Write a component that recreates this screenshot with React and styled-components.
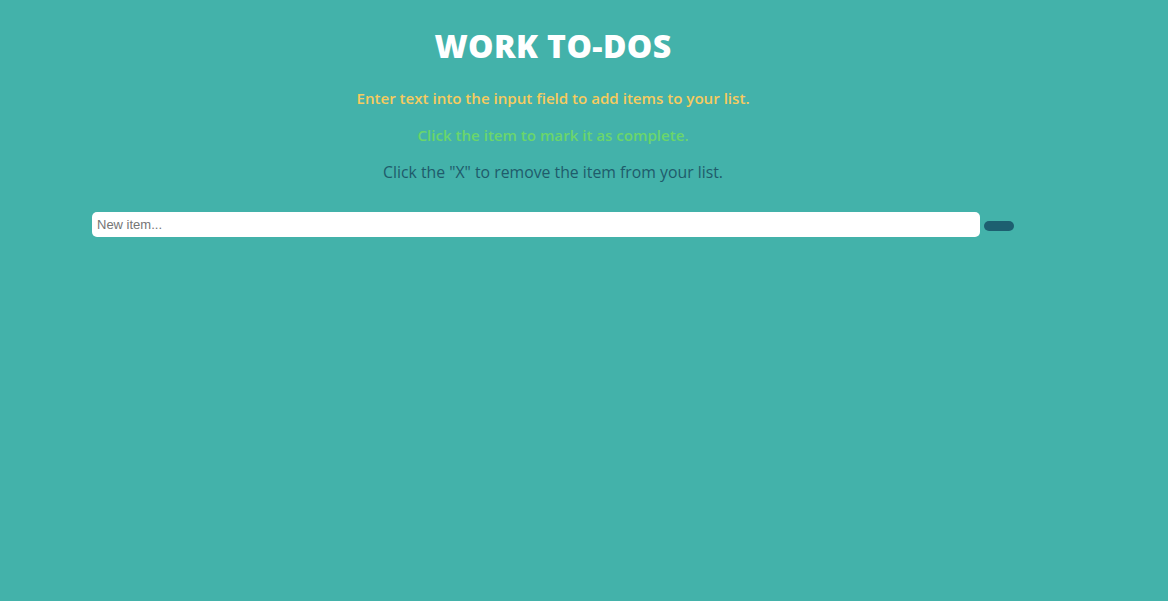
import React, { useState } from 'react'
import styled, { createGlobalStyle } from 'styled-components'

const GlobalStyle = createGlobalStyle`
  html, body {
    margin: 0;
    padding: 0;
    background: #43b2aa;
    font-family: 'Open Sans', 'Noto Sans', sans-serif;
  }
`

const Page = styled.div`
  min-height: 601px;
  padding: 26px 0 0 92px;
  box-sizing: border-box;
`

const Container = styled.div`
  width: 922px;
  display: flex;
  flex-direction: column;
  align-items: center;
`

const Title = styled.h1`
  margin: 0 0 14px;
  font-size: 32px;
  font-weight: 800;
  color: #ffffff;
  letter-spacing: 0.4px;
  line-height: 40px;
`

const Hint = styled.p`
  margin: 0;
  font-size: ${(p) => p.$size || '15.1px'};
  font-weight: ${(p) => p.$weight || 600};
  color: ${(p) => p.$color};
  line-height: 37px;
`

const Form = styled.form`
  align-self: stretch;
  display: flex;
  align-items: center;
  gap: 4px;
  margin-top: 21px;
`

const Input = styled.input`
  flex: 1;
  height: 25px;
  box-sizing: border-box;
  border: none;
  border-radius: 5px;
  padding: 0 5px;
  font-family: 'Liberation Sans', Arial, sans-serif;
  font-size: 13px;
  color: #333;
  outline: none;
  &::placeholder {
    color: #757575;
  }
`

const AddButton = styled.button`
  width: 30px;
  height: 10px;
  margin-top: 3px;
  padding: 0;
  border: none;
  border-radius: 5px;
  background: #1d5f70;
  cursor: pointer;
`

export default function App() {
  const [text, setText] = useState('')
  return (
    <Page>
      <GlobalStyle />
      <Container>
        <Title>WORK TO-DOS</Title>
        <Hint $color="#f7cb5e">Enter text into the input field to add items to your list.</Hint>
        <Hint $color="#6bd66b">Click the item to mark it as complete.</Hint>
        <Hint $color="#1f5b6b" $size="15.8px" $weight={500}>Click the "X" to remove the item from your list.</Hint>
        <Form onSubmit={(e) => e.preventDefault()}>
          <Input
            placeholder="New item..."
            value={text}
            onChange={(e) => setText(e.target.value)}
          />
          <AddButton type="submit" />
        </Form>
      </Container>
    </Page>
  )
}
